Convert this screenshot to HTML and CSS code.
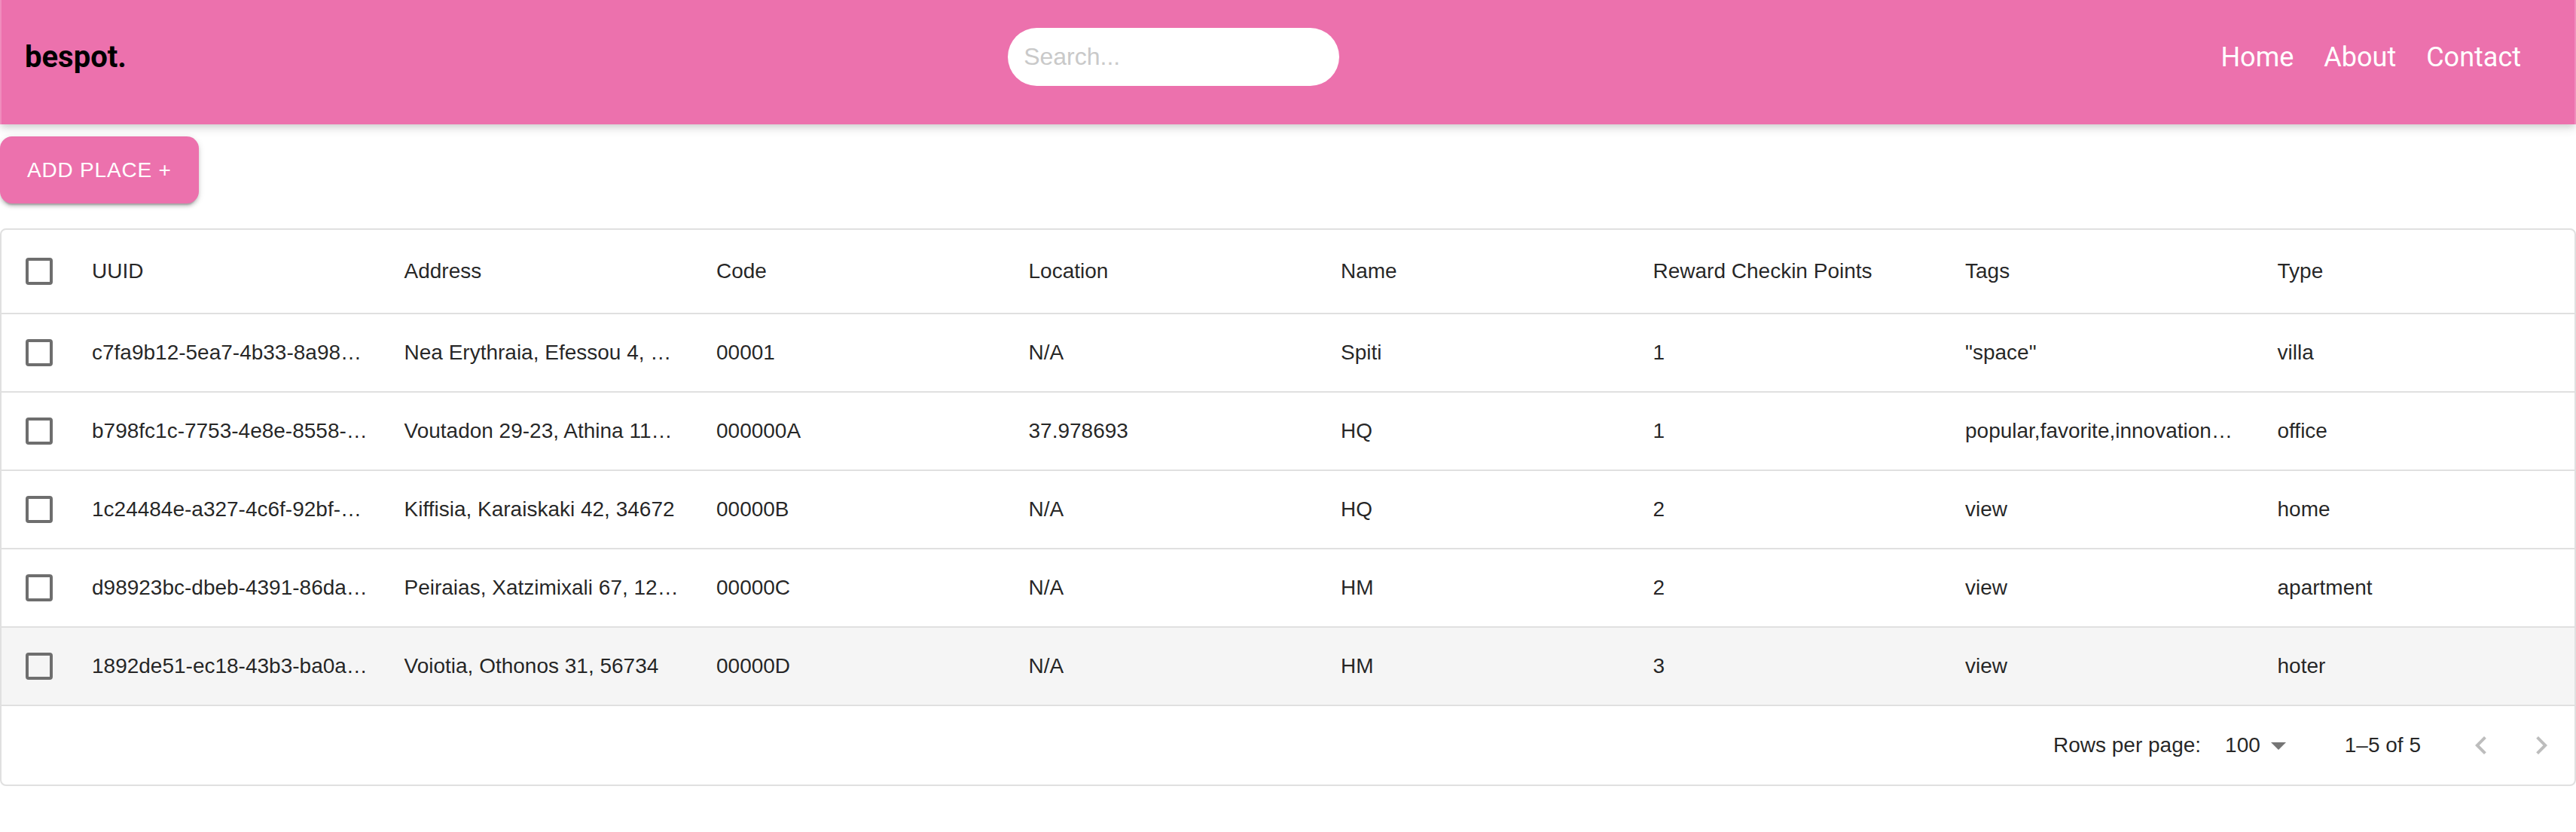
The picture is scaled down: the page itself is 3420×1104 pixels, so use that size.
FILE: index.html
```html
<!DOCTYPE html>
<html lang="en">
<head>
<meta charset="utf-8">
<title>bespot.</title>
<link rel="stylesheet" href="styles.css">
</head>
<body>
<header class="appbar">
  <div class="logo">bespot.</div>
  <input class="search" type="text" placeholder="Search...">
  <nav class="nav">
    <a class="nav-link" href="#">Home</a>
    <a class="nav-link" href="#">About</a>
    <a class="nav-link" href="#">Contact</a>
  </nav>
</header>

<main class="main">
  <button class="add-btn" type="button">Add Place +</button>

  <section class="grid-card">
    <div class="row head">
      <div class="cell check"><span class="box"></span></div>
      <div class="cell">UUID</div>
      <div class="cell">Address</div>
      <div class="cell">Code</div>
      <div class="cell">Location</div>
      <div class="cell">Name</div>
      <div class="cell">Reward Checkin Points</div>
      <div class="cell">Tags</div>
      <div class="cell">Type</div>
    </div>

    <div class="row">
      <div class="cell check"><span class="box"></span></div>
      <div class="cell">c7fa9b12-5ea7-4b33-8a98…</div>
      <div class="cell">Nea Erythraia, Efessou 4, …</div>
      <div class="cell">00001</div>
      <div class="cell">N/A</div>
      <div class="cell">Spiti</div>
      <div class="cell">1</div>
      <div class="cell">"space"</div>
      <div class="cell">villa</div>
    </div>

    <div class="row">
      <div class="cell check"><span class="box"></span></div>
      <div class="cell">b798fc1c-7753-4e8e-8558-…</div>
      <div class="cell">Voutadon 29-23, Athina 11…</div>
      <div class="cell">000000A</div>
      <div class="cell">37.978693</div>
      <div class="cell">HQ</div>
      <div class="cell">1</div>
      <div class="cell">popular,favorite,innovation…</div>
      <div class="cell">office</div>
    </div>

    <div class="row">
      <div class="cell check"><span class="box"></span></div>
      <div class="cell">1c24484e-a327-4c6f-92bf-…</div>
      <div class="cell">Kiffisia, Karaiskaki 42, 34672</div>
      <div class="cell">00000B</div>
      <div class="cell">N/A</div>
      <div class="cell">HQ</div>
      <div class="cell">2</div>
      <div class="cell">view</div>
      <div class="cell">home</div>
    </div>

    <div class="row">
      <div class="cell check"><span class="box"></span></div>
      <div class="cell">d98923bc-dbeb-4391-86da…</div>
      <div class="cell">Peiraias, Xatzimixali 67, 12…</div>
      <div class="cell">00000C</div>
      <div class="cell">N/A</div>
      <div class="cell">HM</div>
      <div class="cell">2</div>
      <div class="cell">view</div>
      <div class="cell">apartment</div>
    </div>

    <div class="row hover">
      <div class="cell check"><span class="box"></span></div>
      <div class="cell">1892de51-ec18-43b3-ba0a…</div>
      <div class="cell">Voiotia, Othonos 31, 56734</div>
      <div class="cell">00000D</div>
      <div class="cell">N/A</div>
      <div class="cell">HM</div>
      <div class="cell">3</div>
      <div class="cell">view</div>
      <div class="cell">hoter</div>
    </div>

    <div class="footer">
      <span class="rpp-label">Rows per page:</span>
      <span class="rpp-select">
        <span class="rpp-value">100</span>
        <svg class="drop-icon" viewBox="0 0 24 24" width="48" height="48"><path d="M7 10l5 5 5-5z"/></svg>
      </span>
      <span class="displayed">1–5 of 5</span>
      <span class="actions">
        <span class="icon-btn"><svg viewBox="0 0 24 24" width="48" height="48"><path d="M15.41 16.59 10.83 12l4.58-4.59L14 6l-6 6 6 6z"/></svg></span>
        <span class="icon-btn"><svg viewBox="0 0 24 24" width="48" height="48"><path d="M8.59 16.59 13.17 12 8.59 7.41 10 6l6 6-6 6z"/></svg></span>
      </span>
    </div>
  </section>
</main>
</body>
</html>
```

FILE: styles.css
```css
* {
  box-sizing: border-box;
}

body {
  margin: 0;
  background: #ffffff;
  font-family: "Liberation Sans", Arial, Helvetica, sans-serif;
  color: rgba(0, 0, 0, 0.87);
}

/* ---------- App bar ---------- */
.appbar {
  height: 165px;
  background: #ec71ad;
  display: flex;
  justify-content: space-between;
  align-items: center;
  padding: 0 31px 14px 31px;
  border-left: 2px solid #f08cbd;
  border-right: 2px solid #f08cbd;
  box-shadow: 0 4px 8px -2px rgba(0, 0, 0, 0.12), 0 8px 10px 0 rgba(0, 0, 0, 0.06), 0 2px 20px 0 rgba(0, 0, 0, 0.05);
  position: relative;
  z-index: 1;
}

.logo {
  font-family: Roboto, "Liberation Sans", sans-serif;
  font-weight: 700;
  font-size: 40px;
  color: #000000;
  line-height: 1;
}

.search {
  width: 440px;
  height: 77px;
  border: none;
  border-radius: 39px;
  background: #ffffff;
  padding: 0 0 0 21px;
  font-family: "Liberation Sans", Arial, sans-serif;
  font-size: 32px;
  color: #333333;
  outline: none;
}

.search::placeholder {
  color: #c9c9c9;
}

.nav {
  display: flex;
  align-items: center;
}

.nav-link {
  font-family: Roboto, "Liberation Sans", sans-serif;
  font-size: 36px;
  color: #ffffff;
  text-decoration: none;
  margin-right: 40px;
  line-height: 1;
}

/* ---------- Main ---------- */
.main {
  padding-top: 16px;
}

.add-btn {
  display: block;
  height: 89px;
  padding: 0 36px;
  border: none;
  border-radius: 16px;
  background: #ec71ad;
  color: #ffffff;
  font-family: "Liberation Sans", Arial, sans-serif;
  font-size: 28px;
  letter-spacing: 0.8px;
  text-transform: uppercase;
  box-shadow: 0 6px 2px -4px rgba(0, 0, 0, 0.2), 0 4px 4px 0 rgba(0, 0, 0, 0.14), 0 2px 10px 0 rgba(0, 0, 0, 0.12);
  cursor: pointer;
}

/* ---------- Data grid ---------- */
.grid-card {
  margin-top: 33px;
  width: 3420px;
  border: 2px solid #e0e0e0;
  border-radius: 8px;
  overflow: hidden;
}

.row {
  display: grid;
  grid-template-columns: 100px repeat(8, 1fr);
  height: 104px;
  border-bottom: 2px solid #e0e0e0;
}

.row.head {
  height: 112px;
}

.row.hover {
  background: #f5f5f5;
}

.cell {
  display: flex;
  align-items: center;
  padding: 0 20px;
  font-size: 28px;
  color: rgba(0, 0, 0, 0.87);
  white-space: nowrap;
  overflow: hidden;
  min-width: 0;
}

.cell.check {
  justify-content: center;
  padding: 0;
}

.box {
  width: 36px;
  height: 36px;
  border: 4px solid #6e6e6e;
  border-radius: 4px;
}

/* ---------- Footer / pagination ---------- */
.footer {
  height: 104px;
  display: flex;
  justify-content: flex-end;
  align-items: center;
  padding-right: 4px;
  font-size: 28px;
  color: rgba(0, 0, 0, 0.87);
}

.rpp-select {
  display: flex;
  align-items: center;
  margin-left: 16px;
  margin-right: 64px;
  padding-left: 16px;
}

.drop-icon {
  fill: #757575;
}

.actions {
  display: flex;
  margin-left: 40px;
}

.icon-btn {
  width: 80px;
  height: 80px;
  display: flex;
  align-items: center;
  justify-content: center;
}

.icon-btn svg {
  fill: #bdbdbd;
}
```
